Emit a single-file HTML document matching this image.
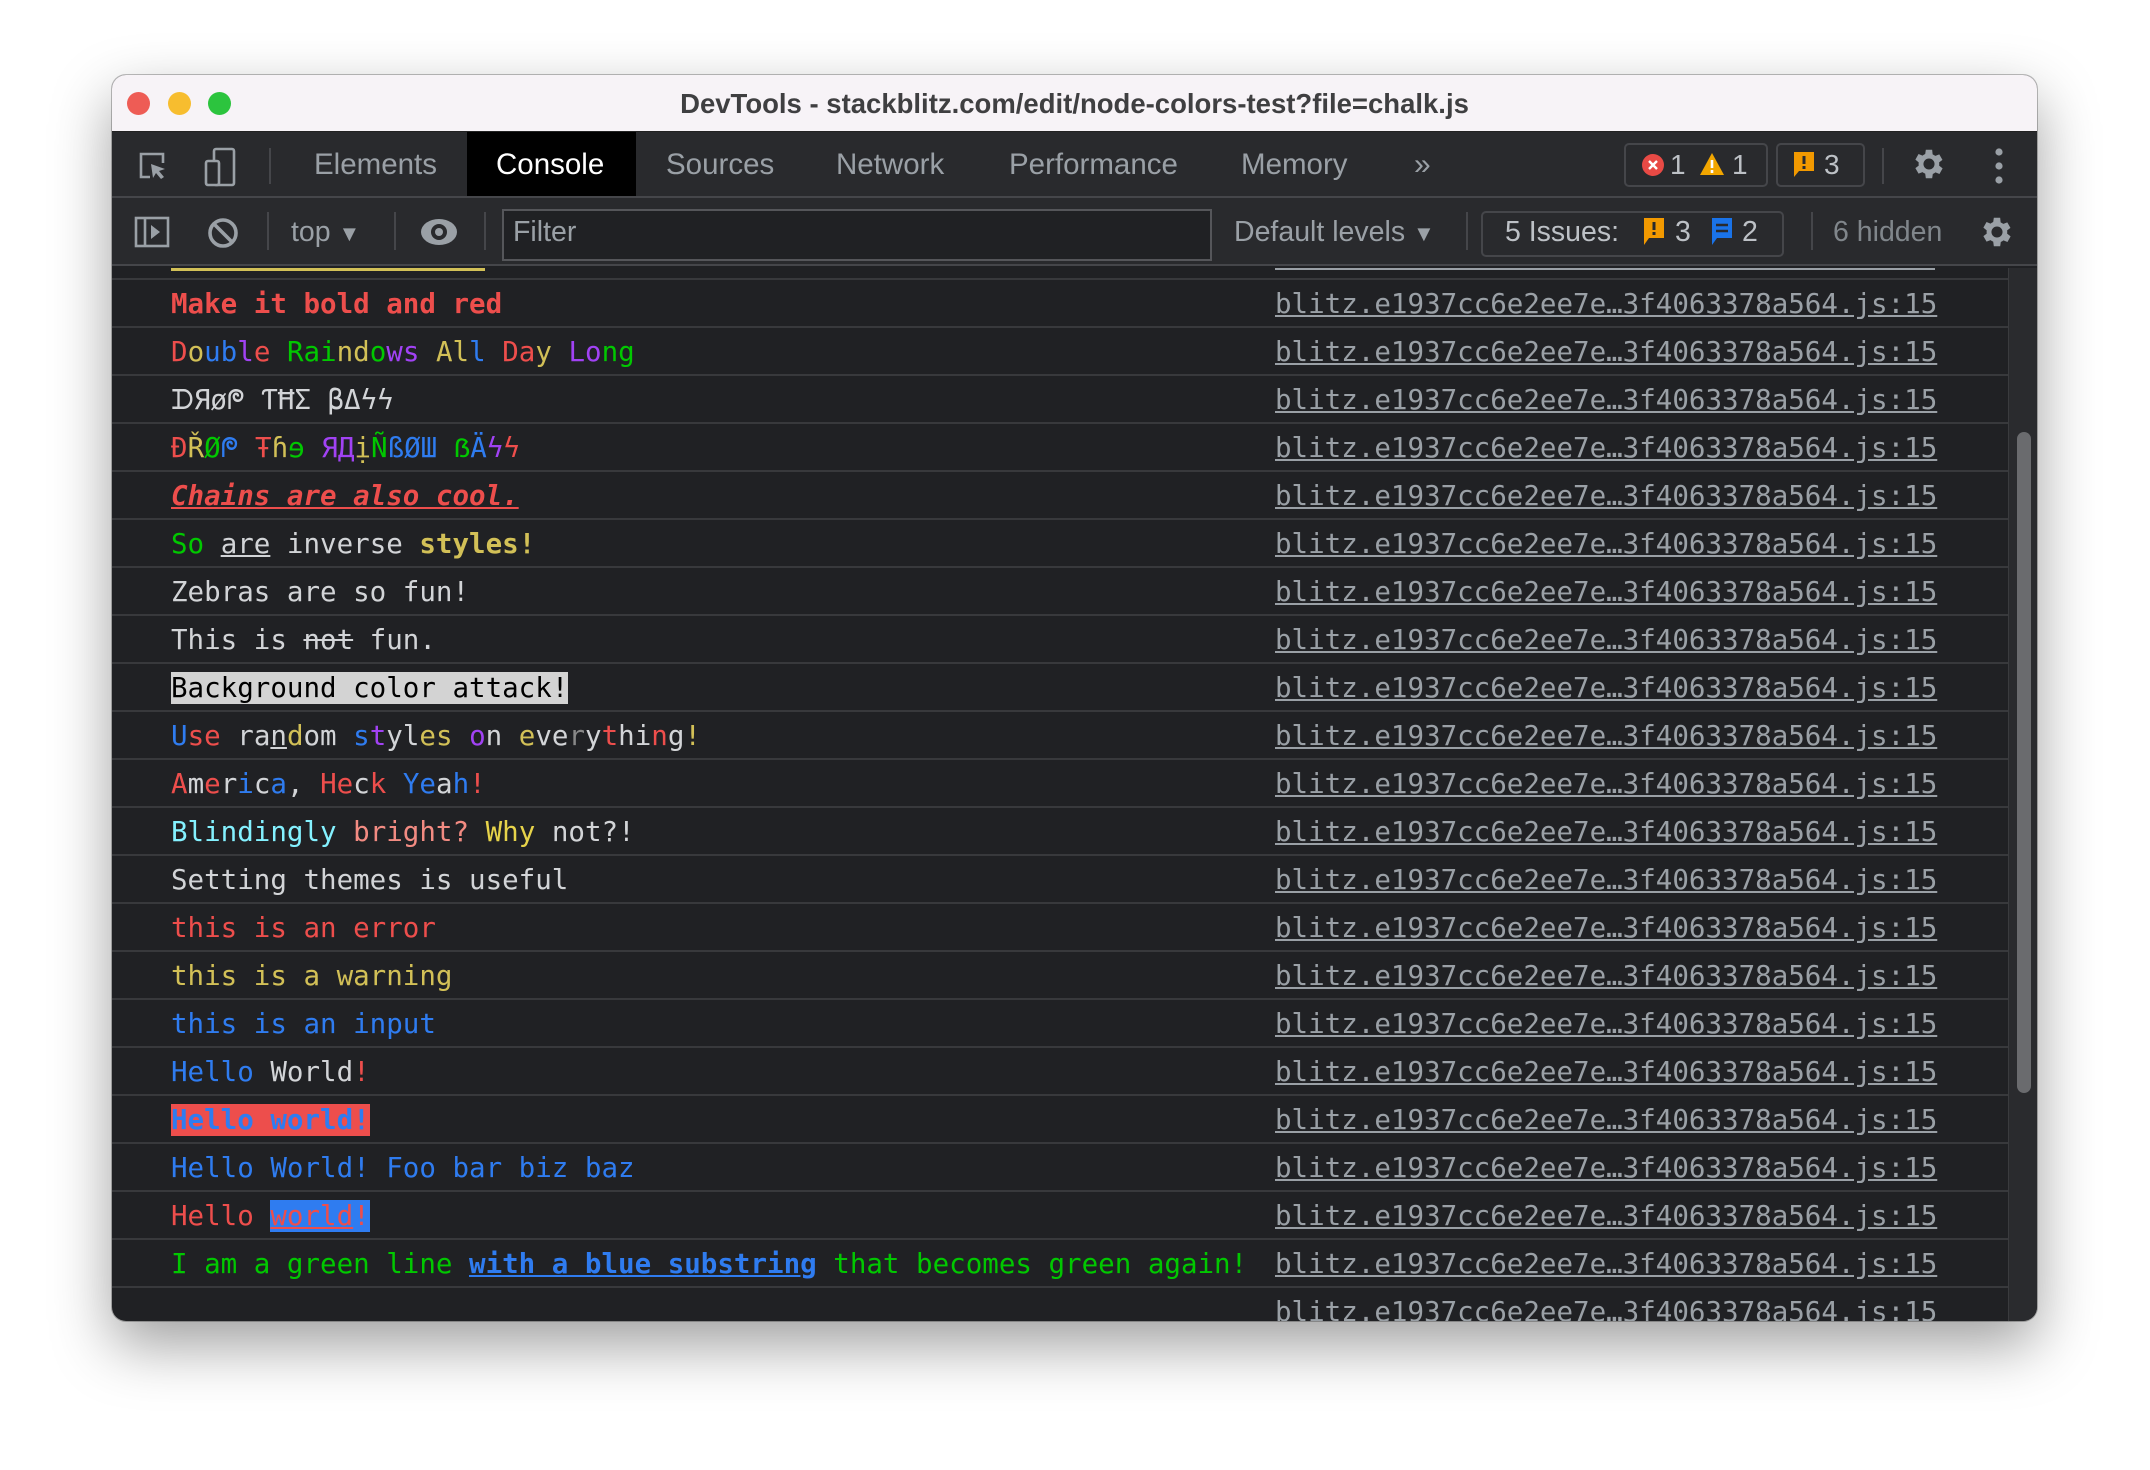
<!DOCTYPE html>
<html><head><meta charset="utf-8"><style>
*{margin:0;padding:0;box-sizing:border-box}
body{width:2150px;height:1470px;background:#fff;position:relative;overflow:hidden;font-family:"Liberation Sans",sans-serif}
.win{position:absolute;left:112px;top:75px;width:1925px;height:1246px;border-radius:14px;overflow:hidden;background:#202124;box-shadow:0 24px 60px rgba(0,0,0,.38),0 0 0 1px rgba(0,0,0,.25)}
.title{position:absolute;left:0;top:0;width:100%;height:57px;background:#f7f3f7;border-bottom:1px solid #222;text-align:center;font-weight:bold;font-size:27.5px;line-height:57px;color:#3f3f41}
.dot{position:absolute;top:17px;width:23px;height:23px;border-radius:50%}
.tb1{position:absolute;left:0;top:57px;width:100%;height:66px;background:#292a2d;border-bottom:2px solid #45464a}
.tb2{position:absolute;left:0;top:123px;width:100%;height:68px;background:#292a2d;border-bottom:2px solid #45464a}
.t{position:absolute;font-size:29.5px;color:#9aa0a6;line-height:66px;top:0}
.tb2 .t{font-size:28.5px!important}
.sep{position:absolute;width:2px;background:#45464a}
.box{position:absolute;border:2px solid #45464a;border-radius:5px}
.rows{position:absolute;left:0;top:193px;width:1896px}
.row{height:48px;border-top:2px solid #38393c;position:relative;font-family:"DejaVu Sans Mono","Liberation Mono",monospace;font-size:27.5px;line-height:46px;color:#d2d4d7;white-space:pre}
.row .m{position:absolute;left:59px;top:1px}
.row .l{position:absolute;left:1163px;top:1px;color:#9aa0a6;text-decoration:underline}
.r{color:#ed4e4c}.g{color:#01c800}.y{color:#d2c057}.b{color:#2f7cf0}.p{color:#a142f4}.w{color:#d2d4d7}
.sb{position:absolute;left:1896px;top:193px;width:29px;height:1053px;background:#2a2b2e;border-left:1px solid #3a3b3e}
</style></head><body>
<div class="win">
 <div class="title">DevTools - stackblitz.com/edit/node-colors-test?file=chalk.js
  <div class="dot" style="left:15px;background:#ee5c55"></div>
  <div class="dot" style="left:56px;background:#f7bd2f"></div>
  <div class="dot" style="left:96px;background:#2cc43e"></div>
 </div>
 <div class="tb1">
  <svg style="position:absolute;left:24px;top:17px" width="34" height="34" viewBox="0 0 34 34" fill="none" stroke="#9aa0a6" stroke-width="2.6"><path d="M14 28H5V5h22v9"/><path d="M15 15l14 5-6 2 5 6-3 2-5-6-3 5z" fill="#9aa0a6" stroke="none"/></svg>
  <svg style="position:absolute;left:90px;top:15px" width="36" height="40" viewBox="0 0 36 40" fill="none" stroke="#9aa0a6" stroke-width="2.6"><rect x="12" y="2" width="20" height="36" rx="2"/><rect x="4" y="14" width="13" height="24" rx="2" fill="#292a2d"/></svg>
  <div class="sep" style="left:157px;top:16px;height:36px"></div>
  <div class="t" style="left:202px">Elements</div>
  <div style="position:absolute;left:355px;top:0;width:169px;height:64px;background:#000"></div>
  <div class="t" style="left:384px;color:#fff">Console</div>
  <div class="t" style="left:554px">Sources</div>
  <div class="t" style="left:724px">Network</div>
  <div class="t" style="left:897px">Performance</div>
  <div class="t" style="left:1129px">Memory</div>
  <div class="t" style="left:1302px;font-size:30px">»</div>
  <div class="box" style="left:1512px;top:11px;width:144px;height:44px"></div>
  <svg style="position:absolute;left:1530px;top:22px" width="22" height="22"><circle cx="11" cy="11" r="11" fill="#e84a45"/><path d="M7 7l8 8M15 7l-8 8" stroke="#fff" stroke-width="2.4"/></svg>
  <div class="t" style="left:1558px;top:0;font-size:28px;color:#bdc1c6">1</div>
  <svg style="position:absolute;left:1587px;top:20px" width="26" height="24"><path d="M13 1L25 23H1z" fill="#f2a600"/><path d="M13 8v8M13 18v3" stroke="#fff" stroke-width="2.6"/></svg>
  <div class="t" style="left:1620px;font-size:28px;color:#bdc1c6">1</div>
  <div class="box" style="left:1664px;top:11px;width:89px;height:44px"></div>
  <svg style="position:absolute;left:1680px;top:19px" width="24" height="28"><path d="M2 1h20v19H7l-5 6z" fill="#f29900"/><path d="M12 5v8M12 15v3" stroke="#292a2d" stroke-width="3"/></svg>
  <div class="t" style="left:1712px;font-size:28px;color:#bdc1c6">3</div>
  <div class="sep" style="left:1770px;top:16px;height:36px"></div>
  <svg style="position:absolute;left:1798px;top:13px" width="38" height="38" viewBox="0 0 24 24"><path fill="#9aa0a6" d="M19.4 13a7.5 7.5 0 000-2l2.1-1.6-2-3.5-2.5 1a7 7 0 00-1.7-1L15 3h-4l-.4 2.7a7 7 0 00-1.7 1l-2.5-1-2 3.5L6.5 11a7.5 7.5 0 000 2l-2.1 1.6 2 3.5 2.5-1a7 7 0 001.7 1L11 21h4l.4-2.7a7 7 0 001.7-1l2.5 1 2-3.5zM13 15.5a3.5 3.5 0 110-7 3.5 3.5 0 010 7z" transform="translate(-1 0)"/></svg>
  <svg style="position:absolute;left:1880px;top:14px" width="14" height="40"><circle cx="7" cy="6" r="3.6" fill="#9aa0a6"/><circle cx="7" cy="20" r="3.6" fill="#9aa0a6"/><circle cx="7" cy="34" r="3.6" fill="#9aa0a6"/></svg>
 </div>
 <div class="tb2">
  <svg style="position:absolute;left:22px;top:18px" width="36" height="32" fill="none" stroke="#9aa0a6" stroke-width="2.6"><rect x="2" y="2" width="32" height="28"/><path d="M11 2v28"/><path d="M17 9l9 7-9 7z" fill="#9aa0a6" stroke="none"/></svg>
  <svg style="position:absolute;left:94px;top:18px" width="34" height="34" fill="none" stroke="#9aa0a6" stroke-width="3.6"><circle cx="17" cy="17" r="13"/><path d="M8 8l18 18"/></svg>
  <div class="sep" style="left:155px;top:14px;height:38px"></div>
  <div class="t" style="left:179px;line-height:68px">top <span style="font-size:22px">▼</span></div>
  <div class="sep" style="left:282px;top:14px;height:38px"></div>
  <svg style="position:absolute;left:308px;top:18px" width="38" height="32"><ellipse cx="19" cy="16" rx="18" ry="13" fill="#9aa0a6"/><circle cx="19" cy="16" r="8" fill="#292a2d"/><circle cx="19" cy="16" r="4" fill="#9aa0a6"/></svg>
  <div class="sep" style="left:372px;top:14px;height:38px"></div>
  <div style="position:absolute;left:390px;top:11px;width:710px;height:52px;background:#202124;border:2px solid #55565a"></div>
  <div class="t" style="left:401px;line-height:68px">Filter</div>
  <div class="t" style="left:1122px;line-height:68px">Default levels <span style="font-size:22px">▼</span></div>
  <div class="sep" style="left:1354px;top:14px;height:38px"></div>
  <div class="box" style="left:1369px;top:13px;width:303px;height:46px"></div>
  <div class="t" style="left:1393px;line-height:68px;color:#bdc1c6">5 Issues:</div>
  <svg style="position:absolute;left:1530px;top:19px" width="24" height="30"><path d="M2 1h20v20H7l-5 7z" fill="#f29900"/><path d="M12 5v8M12 15v3" stroke="#292a2d" stroke-width="3"/></svg>
  <div class="t" style="left:1563px;line-height:68px;color:#bdc1c6">3</div>
  <svg style="position:absolute;left:1598px;top:19px" width="24" height="30"><path d="M2 1h20v20H7l-5 7z" fill="#1a73e8"/><path d="M6 8h12M6 14h12" stroke="#292a2d" stroke-width="2.6"/></svg>
  <div class="t" style="left:1630px;line-height:68px;color:#bdc1c6">2</div>
  <div class="sep" style="left:1699px;top:14px;height:38px"></div>
  <div class="t" style="left:1721px;line-height:68px;color:#80868b">6 hidden</div>
  <svg style="position:absolute;left:1866px;top:15px" width="38" height="38" viewBox="0 0 24 24"><path fill="#9aa0a6" d="M19.4 13a7.5 7.5 0 000-2l2.1-1.6-2-3.5-2.5 1a7 7 0 00-1.7-1L15 3h-4l-.4 2.7a7 7 0 00-1.7 1l-2.5-1-2 3.5L6.5 11a7.5 7.5 0 000 2l-2.1 1.6 2 3.5 2.5-1a7 7 0 001.7 1L11 21h4l.4-2.7a7 7 0 001.7-1l2.5 1 2-3.5zM13 15.5a3.5 3.5 0 110-7 3.5 3.5 0 010 7z" transform="translate(-1 0)"/></svg>
 </div>
 <div style="position:absolute;left:59px;top:193px;width:314px;height:3px;background:#d2c057"></div>
 <div style="position:absolute;left:1163px;top:193px;width:660px;height:2px;background:#9aa0a6"></div>
 <div class="rows" style="top:203px">
  <div class="row"><span class="m r" style="font-weight:bold">Make it bold and red</span><span class="l">blitz.e1937cc6e2ee7e…3f4063378a564.js:15</span></div>
  <div class="row"><span class="m"><span class="r">D</span><span class="y">o</span><span class="b">ub</span><span class="p">l</span><span class="r">e</span> <span class="g">Rai</span><span class="y">nd</span><span class="g">o</span><span class="p">ws</span> <span class="y">Al</span><span class="b">l</span> <span class="r">Da</span><span class="y">y</span> <span class="p">Lo</span><span class="g">ng</span></span><span class="l">blitz.e1937cc6e2ee7e…3f4063378a564.js:15</span></div>
  <div class="row"><span class="m">ᗪЯøᖘ ƬĦΣ βΔϟϟ</span><span class="l">blitz.e1937cc6e2ee7e…3f4063378a564.js:15</span></div>
  <div class="row"><span class="m"><span class="r">Đ</span><span class="y">Ř</span><span class="g">Ø</span><span class="b">ᖘ</span> <span class="r">Ŧ</span><span class="y">ɦ</span><span class="g">ɘ</span> <span class="p">ЯД</span><span class="y">ị</span><span class="g">Ñ</span><span class="b">ßØШ</span> <span class="g">ẞ</span><span class="b">Ä</span><span class="p">ϟ</span><span class="r">ϟ</span></span><span class="l">blitz.e1937cc6e2ee7e…3f4063378a564.js:15</span></div>
  <div class="row"><span class="m r" style="font-weight:bold;font-style:italic;text-decoration:underline">Chains are also cool.</span><span class="l">blitz.e1937cc6e2ee7e…3f4063378a564.js:15</span></div>
  <div class="row"><span class="m"><span class="g">So</span> <u>are</u> inverse <b class="y">styles!</b></span><span class="l">blitz.e1937cc6e2ee7e…3f4063378a564.js:15</span></div>
  <div class="row"><span class="m">Zebras are so fun!</span><span class="l">blitz.e1937cc6e2ee7e…3f4063378a564.js:15</span></div>
  <div class="row"><span class="m">This is <s>not</s> fun.</span><span class="l">blitz.e1937cc6e2ee7e…3f4063378a564.js:15</span></div>
  <div class="row"><span class="m" style="top:8px;line-height:32px;background:#d3d3d3;color:#000">Background color attack!</span><span class="l">blitz.e1937cc6e2ee7e…3f4063378a564.js:15</span></div>
  <div class="row"><span class="m"><span class="b">U</span><span class="r">se</span> r<span class="w">a</span><u>n</u><span class="y">d</span>om <span class="b">s</span><span class="p">t</span>yl<span class="y">es</span> <span class="p">o</span>n <span class="y">e</span>ve<span style="color:#888">r</span>y<span class="r">t</span>hi<span class="r">n</span>g<span class="y">!</span></span><span class="l">blitz.e1937cc6e2ee7e…3f4063378a564.js:15</span></div>
  <div class="row"><span class="m"><span class="r">A</span>m<span class="r">e</span>r<span class="b">i</span>c<span class="b">a</span>, <span class="r">He</span>c<span class="r">k</span> <span class="b">Ye</span>a<span class="b">h</span><span class="r">!</span></span><span class="l">blitz.e1937cc6e2ee7e…3f4063378a564.js:15</span></div>
  <div class="row"><span class="m"><span style="color:#84f1ff">Blindingly</span> <span style="color:#f28b82">bright?</span> <span style="color:#e6d34a">Why</span> not?!</span><span class="l">blitz.e1937cc6e2ee7e…3f4063378a564.js:15</span></div>
  <div class="row"><span class="m">Setting themes is useful</span><span class="l">blitz.e1937cc6e2ee7e…3f4063378a564.js:15</span></div>
  <div class="row"><span class="m r">this is an error</span><span class="l">blitz.e1937cc6e2ee7e…3f4063378a564.js:15</span></div>
  <div class="row"><span class="m y">this is a warning</span><span class="l">blitz.e1937cc6e2ee7e…3f4063378a564.js:15</span></div>
  <div class="row"><span class="m b">this is an input</span><span class="l">blitz.e1937cc6e2ee7e…3f4063378a564.js:15</span></div>
  <div class="row"><span class="m"><span class="b">Hello</span> World<span class="r">!</span></span><span class="l">blitz.e1937cc6e2ee7e…3f4063378a564.js:15</span></div>
  <div class="row"><span class="m b" style="top:8px;line-height:32px;background:#ed4e4c;font-weight:bold">Hello world!</span><span class="l">blitz.e1937cc6e2ee7e…3f4063378a564.js:15</span></div>
  <div class="row"><span class="m b">Hello World! Foo bar biz baz</span><span class="l">blitz.e1937cc6e2ee7e…3f4063378a564.js:15</span></div>
  <div class="row"><span class="m r">Hello <span style="display:inline-block;line-height:32px;background:#2f7cf0"><u>world</u>!</span></span><span class="l">blitz.e1937cc6e2ee7e…3f4063378a564.js:15</span></div>
  <div class="row"><span class="m g">I am a green line <b class="b" style="text-decoration:underline">with a blue substring</b> that becomes green again!</span><span class="l">blitz.e1937cc6e2ee7e…3f4063378a564.js:15</span></div>
  <div class="row"><span class="l">blitz.e1937cc6e2ee7e…3f4063378a564.js:15</span></div>
 </div>
 <div class="sb"><div style="position:absolute;left:8px;top:164px;width:14px;height:661px;border-radius:7px;background:#6a6b6e"></div></div>
</div>
</body></html>
